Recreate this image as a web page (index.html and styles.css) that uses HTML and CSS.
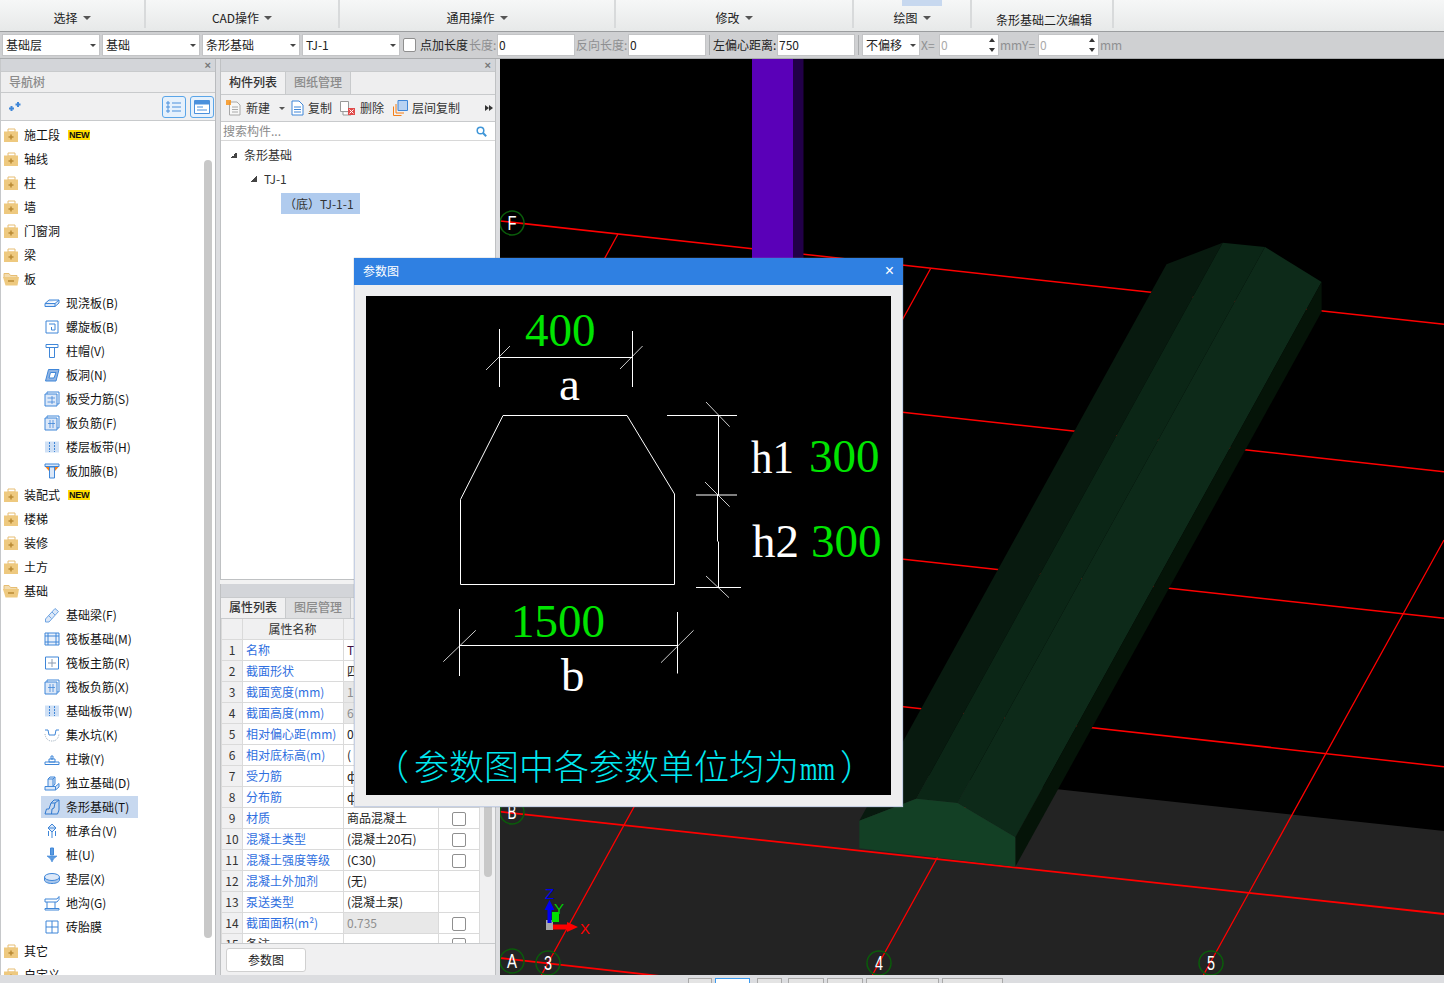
FILE: index.html
```html
<!DOCTYPE html>
<html lang="zh-CN">
<head>
<meta charset="utf-8">
<title>参数图</title>
<link rel="stylesheet" href="styles.css">
</head>
<body>
<svg class="defs" width="0" height="0" aria-hidden="true">
  <symbol id="fc" viewBox="0 0 16 14"><path d="M5 1h7v3H5z" fill="#fff" stroke="#e6bd72"/><path d="M1 3.5h14V14H1z" fill="#eec97f"/><path d="M8 6.500v5M5.500 9h5" stroke="#b98a35" stroke-width="1.500" fill="none"/></symbol>
  <symbol id="fo" viewBox="0 0 16 14"><path d="M1 1.500h5l1.500 2H14V6H1z" fill="#f3dcae" stroke="#e6bd72"/><path d="M0 5h16l-1.500 8.500h-12z" fill="#eec97f"/><path d="M5 9h6" stroke="#b98a35" stroke-width="1.500" fill="none"/></symbol>
  <symbol id="i-slab" viewBox="0 0 16 16"><path d="M1 8.500 5 5h10v3l-4 3.500H1z M1 8.500h10l4-3.500M11 8.500v3" fill="#dce8f8" stroke="#3f86d8"/></symbol>
  <symbol id="i-spiral" viewBox="0 0 16 16"><path d="M2 2h12v12H2z M5 5h6v6H7.500V8" fill="none" stroke="#3f86d8"/></symbol>
  <symbol id="i-cap" viewBox="0 0 16 16"><path d="M2 1.500h12v3H2z M5.500 4.500h5v10h-5z" fill="#fff" stroke="#3f86d8"/></symbol>
  <symbol id="i-hole" viewBox="0 0 16 16"><path d="M4.500 2.500H15l-3 11.500H1.500z" fill="#8fb4e4" stroke="#3f86d8"/><path d="M6.500 5.500H12L10 11H5z" fill="#fff" stroke="#3f86d8"/></symbol>
  <symbol id="i-bar" viewBox="0 0 16 16"><path d="M3 3V1h12v12h-2" fill="none" stroke="#3f86d8"/><path d="M1 3h12v12H1z" fill="#dce8f8" stroke="#3f86d8"/><path d="M3.500 7H11M3.500 11H11M8 5v8" fill="none" stroke="#3f86d8" stroke-width=".8"/></symbol>
  <symbol id="i-neg" viewBox="0 0 16 16"><path d="M3 3V1h12v12h-2" fill="none" stroke="#3f86d8"/><path d="M1 3h12v12H1z" fill="#dce8f8" stroke="#3f86d8"/><path d="M4 8.500h7M6 5v8M9 5v8" fill="none" stroke="#3f86d8" stroke-width=".8"/></symbol>
  <symbol id="i-band" viewBox="0 0 16 16"><path d="M1 2.500h14v11H1z" fill="#cfe0f5"/><path d="M5.500 3v10M10.500 3v10" stroke="#3f86d8" stroke-dasharray="2 1" fill="none"/></symbol>
  <symbol id="i-haunch" viewBox="0 0 16 16"><path d="M1 1h14v2.500H1z" fill="#dce8f8" stroke="#3f86d8"/><path d="M1.500 4H5v4zM14.500 4H11v4z" fill="#f57f17"/><path d="M5.500 4h5v11h-5z" fill="#dce8f8" stroke="#3f86d8"/></symbol>
  <symbol id="i-beam" viewBox="0 0 16 16"><path d="M1.500 12 11 1.500l3.500 3-9.500 10.500H1.500z M4.500 8.500l3 3M8 5l3 3" fill="#dce8f8" stroke="#6fa4e2"/></symbol>
  <symbol id="i-raft" viewBox="0 0 16 16"><path d="M1 2h14v12H1z M4 2v12M12 2v12M1 5h14M1 11h14" fill="#eaf1fb" stroke="#3f86d8"/></symbol>
  <symbol id="i-main" viewBox="0 0 16 16"><path d="M1.500 2h13v12h-13z" fill="none" stroke="#3f86d8"/><path d="M8 4v8M4 8h8" fill="none" stroke="#8a9ab0"/></symbol>
  <symbol id="i-pit" viewBox="0 0 16 16"><path d="M1 3h3l1 5h6l1-5h3" fill="none" stroke="#3f86d8"/><path d="M1 7q1 7 7 7t7-7" fill="none" stroke="#9ab" stroke-dasharray="1 1"/></symbol>
  <symbol id="i-pier" viewBox="0 0 16 16"><path d="M1 11h14v2.500H1z M5 8h6v3H5z M7 5h2v3H7z" fill="#fff" stroke="#3f86d8"/></symbol>
  <symbol id="i-ind" viewBox="0 0 16 16"><path d="M1 11.500h10.500l3.500-3v3.500l-3.500 3H1z M4 11.500V4l2-2h5v7l-2 2.500M4 4h5v7.500M9 4l2-2M11.500 11.500V15" fill="#dce8f8" stroke="#3f86d8"/></symbol>
  <symbol id="i-strip" viewBox="0 0 16 16"><path d="M1 15l1.500-5H5l2-6 3-3h5v10l-1.500 4zM7 4h4l4-3M11 4l-1 5-2 1-.5 5" fill="#c7d8ef" stroke="#2f78d0"/></symbol>
  <symbol id="i-cap2" viewBox="0 0 16 16"><path d="M8 1l4 4-4 4-4-4zM4.500 8v5M8 9v6M11.500 8v5M4 5h8" fill="#dce8f8" stroke="#3f86d8"/></symbol>
  <symbol id="i-pile" viewBox="0 0 16 16"><path d="M6.500 1h3v7h-3z" fill="#5b9be0" stroke="#3f86d8"/><path d="M3 9h10l-3 2.500H6zM6.500 12h3L8 15z" fill="#5b9be0" stroke="#3f86d8" stroke-width=".6"/></symbol>
  <symbol id="i-pad" viewBox="0 0 16 16"><path d="M.5 6v3c0 2 3.400 3.500 7.500 3.500s7.500-1.500 7.500-3.500V6" fill="#a9c7ec" stroke="#3f86d8"/><ellipse cx="8" cy="6" rx="7.500" ry="3.500" fill="#dce8f8" stroke="#3f86d8"/></symbol>
  <symbol id="i-trench" viewBox="0 0 16 16"><path d="M1 4h12l2-2.500v3L13 7H1zM3 7v6M11 7v6M1 13.500h14v1.500H1z" fill="#fff" stroke="#3f86d8"/></symbol>
  <symbol id="i-brick" viewBox="0 0 16 16"><path d="M2 2h12v12H2zM8 2v12M2 8h12" fill="#fff" stroke="#3f86d8"/></symbol>
</svg>

<header class="ribbon">
  <div class="rg g1"><span>选择</span><i class="caret"></i></div>
  <div class="rg g2"><span>CAD操作</span><i class="caret"></i></div>
  <div class="rg g3"><span>通用操作</span><i class="caret"></i></div>
  <div class="rg g4"><span>修改</span><i class="caret"></i></div>
  <div class="rg g5"><b class="rhi"></b><span>绘图</span><i class="caret"></i></div>
  <div class="rg g6 low"><span>条形基础二次编辑</span></div>
</header>

<div class="toolbar">
  <div class="sel s98">基础层<i class="tri"></i></div>
  <div class="sel s98">基础<i class="tri"></i></div>
  <div class="sel s98">条形基础<i class="tri"></i></div>
  <div class="sel s98">TJ-1<i class="tri"></i></div>
  <span class="chk tchk"></span>
  <span class="lb l1">点加长度</span>
  <span class="lb off l2">长度:</span>
  <div class="inp">0</div>
  <span class="lb off l3">反向长度:</span>
  <div class="inp">0</div>
  <span class="tsep"></span>
  <span class="lb l4">左偏心距离:</span>
  <div class="inp">750</div>
  <span class="tsep"></span>
  <div class="sel s58">不偏移<i class="tri"></i></div>
  <span class="lb off l5">X=</span>
  <div class="spin">0<i class="up"></i><i class="dn"></i></div>
  <span class="lb off l6">mmY=</span>
  <div class="spin s2">0<i class="up"></i><i class="dn"></i></div>
  <span class="lb off l7">mm</span>
</div>

<main class="main">
  <aside class="nav">
    <div class="closebar">×</div>
    <div class="navhead">导航树</div>
    <div class="navtools">
      <svg class="plus" width="14" height="12" viewBox="0 0 14 12"><path d="M3.500 5v5M1 7.500h5M10 1v5M7.500 3.500h5" stroke="#3f86d8" stroke-width="2" fill="none"/></svg>
      <span class="navbtn"><svg width="16" height="14" viewBox="0 0 16 14"><path d="M1 2h2v2H1zM1 6h2v2H1zM1 10h2v2H1zM6 3h9M6 7h9M6 11h9" fill="none" stroke="#4a90dc"/></svg></span>
      <span class="navbtn"><svg width="16" height="14" viewBox="0 0 16 14"><path d="M.5.500h15v13H.5z" fill="#fff" stroke="#4a90dc"/><path d="M1 1h14v3.500H1z" fill="#4a90dc"/><path d="M3 7h6M3 10h10" stroke="#4a90dc" fill="none"/></svg></span>
    </div>
    <div class="tree">
      <div class="row"><svg class="fold"><use href="#fc"/></svg>施工段<em class="new">NEW</em></div>
      <div class="row"><svg class="fold"><use href="#fc"/></svg>轴线</div>
      <div class="row"><svg class="fold"><use href="#fc"/></svg>柱</div>
      <div class="row"><svg class="fold"><use href="#fc"/></svg>墙</div>
      <div class="row"><svg class="fold"><use href="#fc"/></svg>门窗洞</div>
      <div class="row"><svg class="fold"><use href="#fc"/></svg>梁</div>
      <div class="row"><svg class="fold"><use href="#fo"/></svg>板</div>
      <div class="row sub"><svg class="ico"><use href="#i-slab"/></svg>现浇板(B)</div>
      <div class="row sub"><svg class="ico"><use href="#i-spiral"/></svg>螺旋板(B)</div>
      <div class="row sub"><svg class="ico"><use href="#i-cap"/></svg>柱帽(V)</div>
      <div class="row sub"><svg class="ico"><use href="#i-hole"/></svg>板洞(N)</div>
      <div class="row sub"><svg class="ico"><use href="#i-bar"/></svg>板受力筋(S)</div>
      <div class="row sub"><svg class="ico"><use href="#i-neg"/></svg>板负筋(F)</div>
      <div class="row sub"><svg class="ico"><use href="#i-band"/></svg>楼层板带(H)</div>
      <div class="row sub"><svg class="ico"><use href="#i-haunch"/></svg>板加腋(B)</div>
      <div class="row"><svg class="fold"><use href="#fc"/></svg>装配式<em class="new">NEW</em></div>
      <div class="row"><svg class="fold"><use href="#fc"/></svg>楼梯</div>
      <div class="row"><svg class="fold"><use href="#fc"/></svg>装修</div>
      <div class="row"><svg class="fold"><use href="#fc"/></svg>土方</div>
      <div class="row"><svg class="fold"><use href="#fo"/></svg>基础</div>
      <div class="row sub"><svg class="ico"><use href="#i-beam"/></svg>基础梁(F)</div>
      <div class="row sub"><svg class="ico"><use href="#i-raft"/></svg>筏板基础(M)</div>
      <div class="row sub"><svg class="ico"><use href="#i-main"/></svg>筏板主筋(R)</div>
      <div class="row sub"><svg class="ico"><use href="#i-neg"/></svg>筏板负筋(X)</div>
      <div class="row sub"><svg class="ico"><use href="#i-band"/></svg>基础板带(W)</div>
      <div class="row sub"><svg class="ico"><use href="#i-pit"/></svg>集水坑(K)</div>
      <div class="row sub"><svg class="ico"><use href="#i-pier"/></svg>柱墩(Y)</div>
      <div class="row sub"><svg class="ico"><use href="#i-ind"/></svg>独立基础(D)</div>
      <div class="row sub on"><span class="hl"><svg class="ico"><use href="#i-strip"/></svg>条形基础(T)</span></div>
      <div class="row sub"><svg class="ico"><use href="#i-cap2"/></svg>桩承台(V)</div>
      <div class="row sub"><svg class="ico"><use href="#i-pile"/></svg>桩(U)</div>
      <div class="row sub"><svg class="ico"><use href="#i-pad"/></svg>垫层(X)</div>
      <div class="row sub"><svg class="ico"><use href="#i-trench"/></svg>地沟(G)</div>
      <div class="row sub"><svg class="ico"><use href="#i-brick"/></svg>砖胎膜</div>
      <div class="row"><svg class="fold"><use href="#fc"/></svg>其它</div>
      <div class="row"><svg class="fold"><use href="#fc"/></svg>自定义</div>
      <span class="navscroll"></span>
    </div>
  </aside>

  <section class="mid">
    <div class="midtop">
      <div class="closebar">×</div>
      <div class="tabs"><span class="tab act">构件列表</span><span class="tab">图纸管理</span></div>
      <div class="mtools">
        <span class="mt t1"><svg width="16" height="16" viewBox="0 0 16 16"><path d="M3.500 2H11l3 3v10H3.500z" fill="#f7f7f7" stroke="#a8a8a8"/><path d="M6 7h6M6 9.500h6M6 12h6" stroke="#a8a8a8" fill="none"/><path d="M0 0h5v5H0z" fill="#f7941d" opacity=".85"/></svg>新建<i class="caret sm"></i></span>
        <span class="mt t2"><svg width="13" height="16" viewBox="0 0 13 16"><path d="M1 1h7l4 4v10H1z" fill="#fff" stroke="#3f86d8"/><path d="M3 7h7M3 9.500h7M3 12h7" stroke="#3f86d8" fill="none"/></svg>复制</span>
        <span class="mt t3"><svg width="16" height="16" viewBox="0 0 16 16"><path d="M.5 1.500h8v10h-8zM3 12v3h8" fill="#fff" stroke="#999"/><path d="M8 8h7v7H8z" fill="#e04b4b"/><path d="M9.500 9.500l4 4M13.500 9.500l-4 4" stroke="#fff" fill="none"/></svg>删除</span>
        <span class="mt t4"><svg width="15" height="16" viewBox="0 0 15 16"><path d="M5 .5h9.500v10H5z" fill="#b8d2f2" stroke="#3f86d8"/><path d="M3 4v9h8M.5 6.500v9h8" fill="none" stroke="#f57f17"/></svg>层间复制</span>
        <i class="more"></i><i class="more m2"></i>
      </div>
      <div class="search"><span>搜索构件...</span><svg width="11" height="11" viewBox="0 0 11 11"><circle cx="4.500" cy="4.500" r="3.300" fill="none" stroke="#3f96d8" stroke-width="1.500"/><path d="M7 7l3.200 3.200" stroke="#3f96d8" stroke-width="2"/></svg></div>
      <div class="ctree">
        <div class="cr c1"><i class="open"></i>条形基础</div>
        <div class="cr c2"><i class="open"></i>TJ-1</div>
        <div class="cr c3"><span class="chl">（底）TJ-1-1</span></div>
      </div>
    </div>
    <div class="midgap"></div>
    <div class="midbot">
      <div class="greybar"></div>
      <div class="tabs t21"><span class="tab act">属性列表</span><span class="tab">图层管理</span></div>
      <div class="propwrap">
        <table class="props">
          <colgroup><col class="c-n"><col class="c-k"><col class="c-v"><col class="c-c"></colgroup>
          <thead><tr><th></th><th>属性名称</th><th></th><th></th></tr></thead>
          <tbody>
            <tr><td class="n">1</td><td class="k">名称</td><td class="v pur">T</td><td class="cc"></td></tr>
            <tr><td class="n">2</td><td class="k">截面形状</td><td class="v">四</td><td class="cc"></td></tr>
            <tr><td class="n">3</td><td class="k">截面宽度(mm)</td><td class="v dis">1</td><td class="cc"></td></tr>
            <tr><td class="n">4</td><td class="k">截面高度(mm)</td><td class="v dis">6</td><td class="cc"></td></tr>
            <tr><td class="n">5</td><td class="k">相对偏心距(mm)</td><td class="v">0</td><td class="cc"></td></tr>
            <tr><td class="n">6</td><td class="k">相对底标高(m)</td><td class="v">(</td><td class="cc"></td></tr>
            <tr><td class="n">7</td><td class="k">受力筋</td><td class="v">ф</td><td class="cc"></td></tr>
            <tr><td class="n">8</td><td class="k">分布筋</td><td class="v">ф</td><td class="cc"></td></tr>
            <tr><td class="n">9</td><td class="k">材质</td><td class="v">商品混凝土</td><td class="cc"><span class="chk"></span></td></tr>
            <tr><td class="n">10</td><td class="k">混凝土类型</td><td class="v">(混凝土20石)</td><td class="cc"><span class="chk"></span></td></tr>
            <tr><td class="n">11</td><td class="k">混凝土强度等级</td><td class="v">(C30)</td><td class="cc"><span class="chk"></span></td></tr>
            <tr><td class="n">12</td><td class="k">混凝土外加剂</td><td class="v">(无)</td><td class="cc"></td></tr>
            <tr><td class="n">13</td><td class="k">泵送类型</td><td class="v">(混凝土泵)</td><td class="cc"></td></tr>
            <tr><td class="n">14</td><td class="k">截面面积(m²)</td><td class="v dis">0.735</td><td class="cc"><span class="chk"></span></td></tr>
            <tr><td class="n">15</td><td class="k blk">备注</td><td class="v"></td><td class="cc"><span class="chk"></span></td></tr>
          </tbody>
        </table>
        <span class="pscroll"></span>
      </div>
      <div class="btnbar"><span class="pbtn">参数图</span></div>
    </div>
  </section>

  <section class="canvas">
    <svg class="scene" width="944" height="916" viewBox="500 59 944 916">
      <rect x="500" y="59" width="944" height="916" fill="#000"/>
      <path d="M500 729 1444 831V975H500z" fill="#232323"/>
      <g class="gl" stroke="#f00" fill="none">
        <path d="M500 221 1444 324.300M500 368 1444 471.700M500 515 1444 618.300M500 662 1444 766.700" stroke-width="1.500"/>
        <path d="M500 811.700 1444 914M500 958 660 976" stroke-width="1.800"/>
        <path d="M541.400 975 930.500 268.700M618 234 560 340M872.400 975 1250 292M1203.400 975 1444 540" stroke-width="1.300"/>
      </g>
      <path d="M752 59h41v210h-41z" fill="#5a00b8"/>
      <path d="M793 59h10.500v210H793z" fill="#220048"/>
      <path d="M1166.500 264.300 1222.700 242.700 916.300 798.700 859.300 820.700z" fill="#081a0f"/>
      <path d="M1222.700 242.700 1265 247 957.500 803 916.300 798.700z" fill="#0b2616"/>
      <path d="M1265 247 1321.600 282 1015.300 837.300 957.500 803z" fill="#0d2a19"/>
      <path d="M1321.600 282 1321.600 311.700 1015.300 866.700 1015.300 837.300z" fill="#051408"/>
      <path d="M859.300 820.700 916.300 798.700 957.500 803 1015.300 837.300 1015.300 866.700 859.300 848.300z" fill="#134025"/>
      <g fill="none" stroke="#0a5c0a" stroke-width="1.500">
        <circle cx="512" cy="223" r="12"/><circle cx="512" cy="812" r="12"/><circle cx="512" cy="961" r="12"/>
        <circle cx="548" cy="963" r="12"/><circle cx="879" cy="963" r="12"/><circle cx="1211" cy="963" r="12"/>
      </g>
      <g class="bub">
        <text x="512" y="230" textLength="9" lengthAdjust="spacingAndGlyphs">F</text><text x="512" y="819" textLength="9" lengthAdjust="spacingAndGlyphs">B</text><text x="512" y="968" textLength="10" lengthAdjust="spacingAndGlyphs">A</text>
        <text x="548" y="970" textLength="8" lengthAdjust="spacingAndGlyphs">3</text><text x="879" y="970" textLength="8" lengthAdjust="spacingAndGlyphs">4</text><text x="1211" y="970" textLength="8" lengthAdjust="spacingAndGlyphs">5</text>
      </g>
      <path d="M546 920h7v10h-7z" fill="#a8a8a8"/>
      <path d="M552 912h7v10h-7z" fill="#00e000"/>
      <path d="M547.500 923V910h-3l5-10 5 10h-3v13z" fill="#0000f0"/>
      <path d="M553 924.500h14V922l11 5-11 5v-2.500h-14z" fill="#f00"/>
      <text class="ax" x="545" y="899" fill="#0000f0">Z</text>
      <text class="ax" x="554" y="914" fill="#00d000">Y</text>
      <text class="ax" x="580" y="934" fill="#f00">X</text>
    </svg>
  </section>
</main>

<footer class="status">
  <i class="st a"></i><i class="st b"></i><i class="st c"></i><i class="st d"></i><i class="st e"></i><i class="st f"></i><i class="st g"></i>
</footer>

<div class="dialog">
  <div class="dtitle"><span>参数图</span><b>×</b></div>
  <div class="dbody">
    <svg class="draw" width="525" height="499" viewBox="366 296 525 499">
      <g fill="none" stroke="#fff">
        <path d="M499.500 329V387M632.500 331V387M499 357.500H632"/>
        <path d="M486 370 510 346M620 369 642.600 346" stroke-width=".8"/>
        <path d="M503 415.500H627L674.500 494V584.500H460.500V499.500z"/>
        <path d="M667 415.500H737M696 495H737M696 587.500H741M718.500 415.500V495M717.500 495V541.500M718.500 541.500V587.500"/>
        <path d="M706 402 729.700 426.700M705 482 729.700 506.700M706 576 729 597.700" stroke-width=".8"/>
        <path d="M459.500 609V676M677.500 612V673.500M459.500 645.500H677"/>
        <path d="M443.300 661.700 475.800 630.300M661 662.700 693.600 630.300" stroke-width=".8"/>
      </g>
      <text class="num gr" x="525" y="346">400</text>
      <text class="num wh" x="559" y="400">a</text>
      <text class="num wh" x="751" y="473" textLength="43" lengthAdjust="spacingAndGlyphs">h1</text>
      <text class="num gr" x="809" y="472">300</text>
      <text class="num wh" x="752" y="557">h2</text>
      <text class="num gr" x="811" y="557">300</text>
      <text class="num gr" x="511" y="636.500">1500</text>
      <text class="num wh" x="561" y="691">b</text>
      <text class="note" x="374" y="780">（</text>
      <text class="note" x="414" y="780">参数图中各参数单位均为</text>
      <text class="note mm" transform="translate(800 780) scale(.68 1)">mm</text>
      <text class="note" x="840" y="780">）</text>
    </svg>
  </div>
</div>
</body>
</html>
```
FILE: styles.css
```css
* { box-sizing: border-box; }
html, body { margin: 0; padding: 0; }
body {
  width: 1444px; height: 983px; overflow: hidden; position: relative;
  display: flex; flex-direction: column;
  background: #dcdde0; color: #222;
  font: 12px/16px "Noto Sans CJK SC", "Liberation Sans", sans-serif;
}
i, em { font-style: normal; }
.defs { position: absolute; }

/* ribbon */
.ribbon { height: 31px; display: flex; background: linear-gradient(#f6f7f7, #e7e9e9); }
.rg { position: relative; display: flex; align-items: center; justify-content: center; gap: 5px; height: 28px; padding-top: 8px; border-right: 2px solid #d8dadb; }
.g1 { width: 146px; } .g2 { width: 194px; } .g3 { width: 276px; } .g4 { width: 238px; } .g5 { width: 118px; } .g6 { width: 142px; }
.low { padding: 12px 0 0 4px; }
.rhi { position: absolute; left: 48px; top: 0; width: 40px; height: 6px; background: #c7d8ef; }
.caret { width: 0; height: 0; border: 4px solid transparent; border-top: 4px solid #555; border-bottom: 0; }
.caret.sm { border-width: 3px; border-bottom: 0; border-top-color: #555; margin-left: 5px; }

/* toolbar */
.toolbar { height: 28px; display: flex; align-items: center; padding-left: 2px; background: #cfd0d2; border-top: 1px solid #9b9d9f; border-bottom: 1px solid #a9abad; white-space: nowrap; }
.sel, .inp, .spin { position: relative; height: 22px; background: #fff; border: 1px solid #c3c4c6; line-height: 20px; padding-left: 3px; flex: none; }
.inp, .spin { padding-left: 1px; }
.s98 { width: 98px; margin-right: 2px; }
.s58 { width: 58px; }
.tri { position: absolute; right: 3px; top: 9px; border: 3px solid transparent; border-top: 3px solid #444; border-bottom: 0; }
.chk { display: inline-block; width: 14px; height: 14px; background: #fff; border: 1px solid #8f8f8f; border-radius: 2px; vertical-align: middle; }
.tchk { flex: none; width: 13px; margin: 0 4px 0 1px; }
.lb { flex: none; }
.off { color: #8e8f91; }
.l1 { width: 49px; } .l2 { width: 28px; } .l3 { width: 52px; margin-left: 1px; } .l4 { width: 64px; } .l5 { width: 18px; margin-left: 1px; } .l6 { width: 38px; margin-left: 1px; } .l7 { margin-left: 1px; }
.inp { width: 78px; }
.tsep { width: 1px; height: 20px; background: #a9abad; margin: 0 3px 0 3px; flex: none; }
.spin { width: 60px; color: #aaa; }
.s2 { width: 61px; }
.up, .dn { position: absolute; right: 3px; border: 3px solid transparent; }
.up { top: 3px; border-bottom: 4px solid #333; border-top: 0; }
.dn { bottom: 3px; border-top: 4px solid #333; border-bottom: 0; }

/* main */
.main { height: 916px; display: flex; flex: none; }
.nav { width: 216px; margin-right: 4px; display: flex; flex-direction: column; background: #fff; flex: none; border-right: 1px solid #b9bbbe; border-left: 1px solid #c6c8ca; }
.closebar { height: 12px; flex: none; background: #d3d5d9; color: #777; font: bold 11px/12px "Liberation Sans", sans-serif; text-align: right; padding-right: 4px; }
.navhead { height: 22px; flex: none; background: #eeeeef; color: #8b8b8b; line-height: 19px; padding-left: 8px; border-top: 1px solid #c8cacc; border-bottom: 1px solid #c8cacc; font-weight: 500; }
.navtools { height: 28px; flex: none; background: #f0f0f1; display: flex; align-items: center; gap: 4px; padding-right: 1px; border-bottom: 1px solid #c8cacc; }
.plus { margin: 0 auto 0 7px; }
.navbtn { width: 24px; height: 22px; display: flex; align-items: center; justify-content: center; background: #e6f1fc; border: 1px solid #5aa5e8; border-radius: 3px; }
.tree { position: relative; flex: 1; padding-top: 2px; overflow: hidden; color: #111; }
.row { height: 24px; line-height: 24px; display: flex; align-items: center; padding-left: 2px; white-space: nowrap; }
.fold { width: 16px; height: 14px; margin-right: 5px; flex: none; }
.sub { padding-left: 43px; }
.ico { width: 16px; height: 16px; margin-right: 6px; flex: none; }
.new { margin-left: 8px; height: 10px; padding: 0 1px; background: #ffdc00; font: bold 9px/10px "Liberation Sans", sans-serif; letter-spacing: -.3px; color: #111; }
.on { padding-left: 40px; }
.hl { display: flex; align-items: center; width: 97px; height: 22px; padding-left: 3px; background: #c7d8ef; }
.navscroll { position: absolute; left: 203px; top: 39px; width: 8px; height: 778px; border-radius: 4px; background: #c8c8c8; }

/* mid */
.mid { width: 276px; margin-right: 4px; flex: none; display: flex; flex-direction: column; }
.midtop { height: 521px; display: flex; flex-direction: column; background: #fff; border: 1px solid #bfc1c3; border-top: 0; }
.tabs { height: 23px; flex: none; display: flex; background: #eeeeef; border-top: 1px solid #c8cacc; }
.tab { width: 65px; text-align: center; line-height: 20px; color: #8b8b8b; background: #dedfe1; font-weight: 500; border-right: 1px solid #c8cacc; }
.tab.act { color: #333; background: #f0f0f1; }
.mtools { position: relative; height: 27px; flex: none; background: #f0f0f1; border-top: 1px solid #c8cacc; display: flex; align-items: center; color: #333; }
.mt { display: flex; align-items: center; position: absolute; top: 5px; gap: 4px; }
.t1 { left: 5px; } .t2 { left: 70px; } .t3 { left: 119px; } .t4 { left: 172px; }
.more { position: absolute; left: 264px; top: 10px; border: 3px solid transparent; border-left: 4px solid #333; border-right: 0; }
.m2 { left: 268px; }
.search { height: 20px; flex: none; display: flex; align-items: center; justify-content: space-between; padding: 0 8px 0 2px; color: #8b8b8b; border-top: 1px solid #c8cacc; border-bottom: 1px solid #d8d8d8; }
.ctree { flex: 1; padding-top: 2px; color: #333; }
.cr { height: 24px; display: flex; align-items: center; }
.c1 { padding-left: 10px; } .c2 { padding-left: 30px; } .c3 { padding-left: 60px; }
.open { width: 6px; height: 6px; margin-right: 7px; background: linear-gradient(135deg, transparent 50%, #444 50%); }
.chl { height: 21px; width: 79px; line-height: 21px; background: #b0cbee; padding-left: 3px; }
.midgap { height: 4px; flex: none; background: #f2f2f2; }
.midbot { flex: 1; display: flex; flex-direction: column; background: #f0f0f1; border-right: 1px solid #bfc1c3; border-left: 1px solid #bfc1c3; min-height: 0; }
.greybar { height: 13px; flex: none; background: #d3d5d9; }
.t21 { height: 21px; }
.t21 .tab { line-height: 18px; }
.propwrap { position: relative; height: 326px; flex: none; overflow: hidden; background: #f0f0f1; border-top: 1px solid #c8cacc; border-bottom: 1px solid #c8cacc; }
.props { width: 258px; table-layout: fixed; border-collapse: collapse; background: #fff; }
.c-n { width: 21px; } .c-k { width: 101px; } .c-v { width: 95px; } .c-c { width: 41px; }
.props th, .props td { height: 21px; padding: 0 0 0 3px; border: 1px solid #dadada; white-space: nowrap; overflow: hidden; line-height: 20px; font-weight: 400; }
.props th { background: #f0f0f1; height: 20px; text-align: center; color: #333; border-top: 0; padding-right: 4px; }
.props .n { background: #f0f0f1; text-align: center; padding: 0; color: #333; }
.k { color: #2f6fe0; }
.blk { color: #333; }
.v { color: #222; }
.pur { color: #40103f; }
.dis { background: #e8e8e8; color: #8e8e8e; }
.props .cc { text-align: center; padding: 0; }
.cc .chk { display: block; margin: 2px auto 0; }
.pscroll { position: absolute; left: 263px; top: 150px; width: 8px; height: 108px; border-radius: 4px; background: #c8c8c8; }
.btnbar { flex: 1; padding: 4px 0 0 5px; }
.pbtn { display: block; width: 80px; height: 24px; line-height: 22px; text-align: center; background: #fff; border: 1px solid #d0d0d0; border-radius: 3px; color: #222; }

/* canvas */
.canvas { flex: 1; overflow: hidden; background: #000; }
.scene { display: block; }
.bub text { fill: #fff; font: 20px "Liberation Sans", sans-serif; text-anchor: middle; }
.ax { font: 15px "Liberation Sans", sans-serif; }

/* status */
.status { height: 8px; flex: none; position: relative; background: #dcdde0; }
.st { position: absolute; top: 3px; height: 5px; background: #e4e4e4; border: 1px solid #a9a9a9; border-bottom: 0; }
.a { left: 688px; width: 24px; } .b { left: 715px; width: 35px; background: #fff; border-color: #3a9af0; } .c { left: 757px; width: 25px; } .d { left: 788px; width: 36px; } .e { left: 827px; width: 36px; } .f { left: 866px; width: 73px; } .g { left: 942px; width: 61px; }

/* dialog */
.dialog { position: absolute; left: 354px; top: 258px; width: 549px; height: 549px; background: #eeeeef; border: 1px solid #c6d0e4; border-top: 0; box-shadow: 0 0 1px #8b93a5; }
.dtitle { height: 27px; margin: 0 -1px; background: #2f80e2; color: #fff; display: flex; align-items: center; justify-content: space-between; padding: 0 9px 2px; }
.dtitle b { font: 16px/16px "Liberation Sans", sans-serif; }
.dbody { padding: 11px 0 0 11px; }
.draw { display: block; background: #000; }
.num { font: 47px "Liberation Serif", serif; }
.gr { fill: #00e400; }
.wh { fill: #fff; }
.note { font: 300 35px "Noto Sans CJK SC", sans-serif; fill: #00e8f0; }
.mm { font: 33px "Liberation Serif", serif; }
```
